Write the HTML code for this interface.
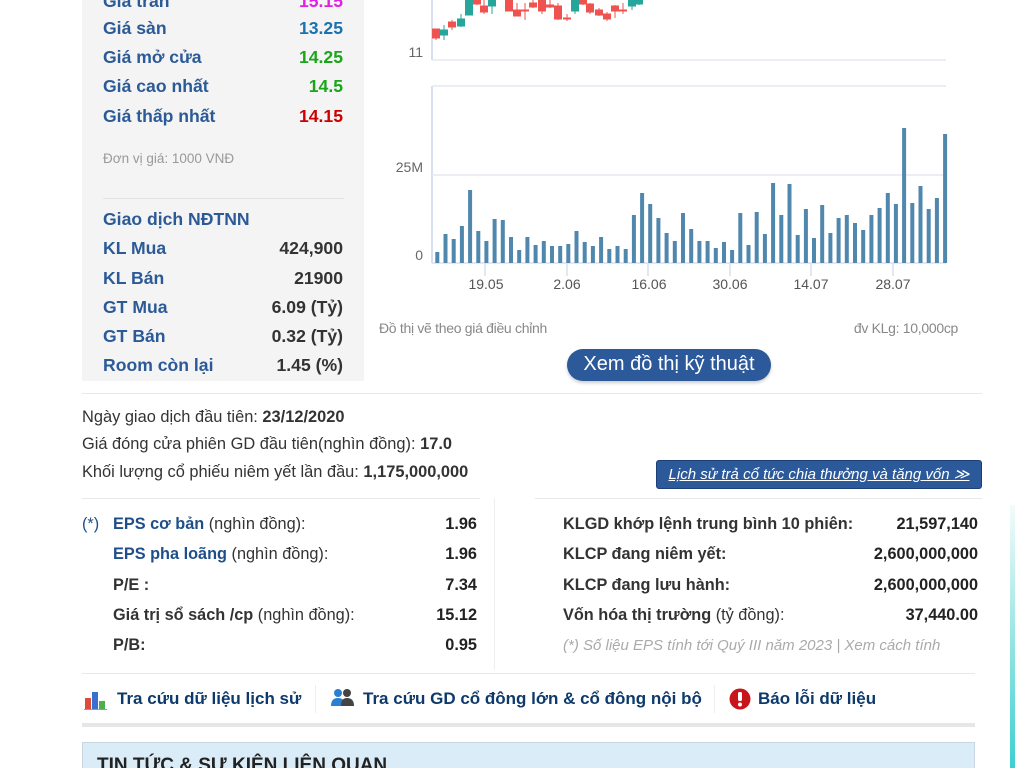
<!DOCTYPE html>
<html><head><meta charset="utf-8"><style>
*{margin:0;padding:0;box-sizing:border-box}
html,body{width:1015px;height:768px;overflow:hidden}
body{background:#fff;font-family:"Liberation Sans",Arial,sans-serif;position:relative}
.a{position:absolute;white-space:nowrap}
.lb{font-weight:bold;font-size:17.6px;color:#2b5a96}
.vr{font-weight:bold;font-size:17.6px;text-align:right;right:672px}
.t15{font-size:16.4px;color:#333}
.n{font-size:16.3px;color:#333}
.v{font-weight:bold;font-size:16.3px;color:#222;text-align:right}
.lk{font-weight:bold;font-size:17px;color:#0d3a6b}
</style></head><body>
<div class="a" style="left:82px;top:0;width:282px;height:381px;background:#f4f4f4"></div>
<div class="a lb" style="left:103px;top:-9px">Giá trần</div><div class="a vr" style="top:-9px;color:#e020e0">15.15</div>
<div class="a lb" style="left:103px;top:18px">Giá sàn</div><div class="a vr" style="top:18px;color:#1b72b0">13.25</div>
<div class="a lb" style="left:103px;top:47px">Giá mở cửa</div><div class="a vr" style="top:47px;color:#1aa51a">14.25</div>
<div class="a lb" style="left:103px;top:76px">Giá cao nhất</div><div class="a vr" style="top:76px;color:#1aa51a">14.5</div>
<div class="a lb" style="left:103px;top:106px">Giá thấp nhất</div><div class="a vr" style="top:106px;color:#cc0000">14.15</div>
<div class="a" style="left:103px;top:151px;font-size:13.5px;color:#999">Đơn vị giá: 1000 VNĐ</div>
<div class="a" style="left:103px;top:198px;width:241px;height:1px;background:#e4e4e4"></div>
<div class="a lb" style="left:103px;top:209px">Giao dịch NĐTNN</div>
<div class="a lb" style="left:103px;top:238px">KL Mua</div><div class="a vr" style="top:238px;color:#333">424,900</div>
<div class="a lb" style="left:103px;top:268px">KL Bán</div><div class="a vr" style="top:268px;color:#333">21900</div>
<div class="a lb" style="left:103px;top:297px">GT Mua</div><div class="a vr" style="top:297px;color:#333">6.09 (Tỷ)</div>
<div class="a lb" style="left:103px;top:326px">GT Bán</div><div class="a vr" style="top:326px;color:#333">0.32 (Tỷ)</div>
<div class="a lb" style="left:103px;top:355px">Room còn lại</div><div class="a vr" style="top:355px;color:#333">1.45 (%)</div>

<svg class="a" style="left:0;top:0" width="1015" height="300" font-family="Liberation Sans,sans-serif">
<line x1="432" y1="0" x2="432" y2="60" stroke="#d8dff0" stroke-width="2"/>
<line x1="432" y1="60" x2="946" y2="60" stroke="#e6e9f0" stroke-width="1.5"/>
<text x="423" y="57" font-size="14" fill="#666" text-anchor="end">11</text>
<g fill="#ef5350" stroke="#ef5350">
<line x1="436" y1="29" x2="436" y2="40"/><rect x="432.5" y="29" width="7" height="9"/>
<line x1="452" y1="20" x2="452" y2="30"/><rect x="448.5" y="22" width="7" height="5"/>
<line x1="477" y1="0" x2="477" y2="5"/><rect x="473.5" y="0" width="7" height="4"/>
<line x1="484" y1="0" x2="484" y2="14"/><rect x="480.5" y="6" width="7" height="6"/>
<line x1="509" y1="0" x2="509" y2="11"/><rect x="505.5" y="0" width="7" height="11"/>
<line x1="517" y1="3" x2="517" y2="16"/><rect x="513.5" y="10" width="7" height="6"/>
<line x1="525" y1="3" x2="525" y2="20"/><rect x="521.5" y="10" width="7" height="1"/>
<line x1="533" y1="0" x2="533" y2="8"/><rect x="529.5" y="3" width="7" height="4"/>
<line x1="542" y1="0" x2="542" y2="14"/><rect x="538.5" y="0" width="7" height="11"/>
<line x1="550" y1="0" x2="550" y2="8"/><rect x="546.5" y="5" width="7" height="2"/>
<line x1="558" y1="3" x2="558" y2="20"/><rect x="554.5" y="6" width="7" height="13"/>
<line x1="567" y1="14" x2="567" y2="21"/><rect x="563.5" y="18" width="7" height="1"/>
<line x1="583" y1="0" x2="583" y2="5"/><rect x="579.5" y="0" width="7" height="4"/>
<line x1="590" y1="3" x2="590" y2="14"/><rect x="586.5" y="4" width="7" height="8"/>
<line x1="599" y1="8" x2="599" y2="16"/><rect x="595.5" y="10" width="7" height="5"/>
<line x1="607" y1="12" x2="607" y2="21"/><rect x="603.5" y="14" width="7" height="5"/>
<line x1="615" y1="5" x2="615" y2="18"/><rect x="611.5" y="6" width="7" height="5"/>
<line x1="623" y1="3" x2="623" y2="14"/><rect x="619.5" y="10" width="7" height="1"/>
</g>
<g fill="#26a69a" stroke="#26a69a">
<line x1="444" y1="25" x2="444" y2="40"/><rect x="440.5" y="30" width="7" height="5"/>
<line x1="461" y1="14" x2="461" y2="27"/><rect x="457.5" y="19" width="7" height="7"/>
<line x1="469" y1="0" x2="469" y2="15"/><rect x="465.5" y="0" width="7" height="15"/>
<line x1="492" y1="0" x2="492" y2="14"/><rect x="488.5" y="0" width="7" height="6"/>
<line x1="575" y1="0" x2="575" y2="14"/><rect x="571.5" y="0" width="7" height="11"/>
<line x1="632" y1="0" x2="632" y2="10"/><rect x="628.5" y="0" width="7" height="6"/>
<line x1="639" y1="0" x2="639" y2="5"/><rect x="635.5" y="0" width="7" height="4"/>
</g>
<line x1="432" y1="86" x2="432" y2="263" stroke="#d8dff0" stroke-width="2"/>
<line x1="432" y1="86" x2="946" y2="86" stroke="#e6e9f0" stroke-width="1.5"/>
<line x1="432" y1="175" x2="946" y2="175" stroke="#e6e9f0" stroke-width="1.5"/>
<line x1="432" y1="263" x2="946" y2="263" stroke="#d8dff0" stroke-width="1.5"/>
<text x="423" y="172" font-size="14" fill="#666" text-anchor="end">25M</text>
<text x="423" y="260" font-size="14" fill="#666" text-anchor="end">0</text>
<g stroke="#d8dff0" stroke-width="1.5">
<line x1="485" y1="263" x2="485" y2="276"/><line x1="567" y1="263" x2="567" y2="276"/><line x1="648" y1="263" x2="648" y2="276"/><line x1="730" y1="263" x2="730" y2="276"/><line x1="811" y1="263" x2="811" y2="276"/><line x1="893" y1="263" x2="893" y2="276"/>
</g>
<g font-size="14" fill="#555" text-anchor="middle">
<text x="486" y="289">19.05</text><text x="567" y="289">2.06</text><text x="649" y="289">16.06</text><text x="730" y="289">30.06</text><text x="811" y="289">14.07</text><text x="893" y="289">28.07</text>
</g>
<g fill="#4f87ad">
<rect x="435.3" y="252" width="4" height="11"/><rect x="443.5" y="234" width="4" height="29"/><rect x="451.7" y="239" width="4" height="24"/><rect x="459.9" y="226" width="4" height="37"/><rect x="468.1" y="190" width="4" height="73"/><rect x="476.3" y="231" width="4" height="32"/><rect x="484.4" y="241" width="4" height="22"/><rect x="492.6" y="219" width="4" height="44"/><rect x="500.8" y="220" width="4" height="43"/><rect x="509" y="237" width="4" height="26"/><rect x="517.2" y="250" width="4" height="13"/><rect x="525.4" y="237" width="4" height="26"/><rect x="533.6" y="245" width="4" height="18"/><rect x="541.8" y="241" width="4" height="22"/><rect x="550" y="246" width="4" height="17"/><rect x="558.2" y="246" width="4" height="17"/><rect x="566.3" y="244" width="4" height="19"/><rect x="574.5" y="231" width="4" height="32"/><rect x="582.7" y="242" width="4" height="21"/><rect x="590.9" y="246" width="4" height="17"/><rect x="599.1" y="237" width="4" height="26"/><rect x="607.3" y="249" width="4" height="14"/><rect x="615.5" y="246" width="4" height="17"/><rect x="623.7" y="249" width="4" height="14"/><rect x="631.9" y="215" width="4" height="48"/><rect x="640.1" y="193" width="4" height="70"/><rect x="648.2" y="204" width="4" height="59"/><rect x="656.4" y="218" width="4" height="45"/><rect x="664.6" y="233" width="4" height="30"/><rect x="672.8" y="241" width="4" height="22"/><rect x="681" y="213" width="4" height="50"/><rect x="689.2" y="229" width="4" height="34"/><rect x="697.4" y="241" width="4" height="22"/><rect x="705.6" y="241" width="4" height="22"/><rect x="713.8" y="248" width="4" height="15"/><rect x="722" y="242" width="4" height="21"/><rect x="730.1" y="250" width="4" height="13"/><rect x="738.3" y="213" width="4" height="50"/><rect x="746.5" y="245" width="4" height="18"/><rect x="754.7" y="212" width="4" height="51"/><rect x="762.9" y="234" width="4" height="29"/><rect x="771.1" y="183" width="4" height="80"/><rect x="779.3" y="215" width="4" height="48"/><rect x="787.5" y="184" width="4" height="79"/><rect x="795.7" y="235" width="4" height="28"/><rect x="803.9" y="209" width="4" height="54"/><rect x="812" y="238" width="4" height="25"/><rect x="820.2" y="205" width="4" height="58"/><rect x="828.4" y="233" width="4" height="30"/><rect x="836.6" y="218" width="4" height="45"/><rect x="844.8" y="215" width="4" height="48"/><rect x="853" y="223" width="4" height="40"/><rect x="861.2" y="230" width="4" height="33"/><rect x="869.4" y="215" width="4" height="48"/><rect x="877.6" y="208" width="4" height="55"/><rect x="885.8" y="193" width="4" height="70"/><rect x="893.9" y="204" width="4" height="59"/><rect x="902.1" y="128" width="4" height="135"/><rect x="910.3" y="203" width="4" height="60"/><rect x="918.5" y="186" width="4" height="77"/><rect x="926.7" y="209" width="4" height="54"/><rect x="934.9" y="198" width="4" height="65"/><rect x="943.1" y="134" width="4" height="129"/>
</g>
</svg>
<div class="a" style="left:379px;top:320px;font-size:14px;color:#888;letter-spacing:-0.3px">Đồ thị vẽ theo giá điều chỉnh</div>
<div class="a" style="right:57px;top:320px;font-size:14px;color:#888;letter-spacing:-0.3px">đv KLg: 10,000cp</div>
<div class="a" style="left:567px;top:349px;width:204px;height:32px;background:#2c5999;border-radius:16px;color:#fff;font-size:20px;text-align:center;line-height:31px;box-shadow:0 2px 3px rgba(0,0,0,.2)">Xem đồ thị kỹ thuật</div>

<div class="a" style="left:82px;top:393px;width:900px;height:1px;background:#e8e8e8"></div>
<div class="a t15" style="left:82px;top:408px">Ngày giao dịch đầu tiên: <b>23/12/2020</b></div>
<div class="a t15" style="left:82px;top:435px">Giá đóng cửa phiên GD đầu tiên(nghìn đồng): <b>17.0</b></div>
<div class="a t15" style="left:82px;top:463px">Khối lượng cổ phiếu niêm yết lần đầu: <b>1,175,000,000</b></div>
<div class="a" style="left:656px;top:460px;width:326px;height:29px;background:#2c5999;border:1px solid #1d3f77;border-radius:3px;color:#fff;font-size:15px;font-style:italic;text-decoration:underline;text-align:center;line-height:27px">Lịch sử trả cổ tức chia thưởng và tăng vốn ≫</div>

<div class="a" style="left:82px;top:498px;width:398px;height:1px;background:#e8e8e8"></div>
<div class="a" style="left:535px;top:498px;width:447px;height:1px;background:#e8e8e8"></div>
<div class="a" style="left:494px;top:498px;width:1px;height:172px;background:#eee"></div>

<div class="a n" style="left:82px;top:515px;color:#1f4f8a">(*)</div>
<div class="a n" style="left:113px;top:515px"><b style="color:#1f4f8a">EPS cơ bản</b> (nghìn đồng):</div><div class="a v" style="right:538px;top:515px">1.96</div>
<div class="a n" style="left:113px;top:545px"><b style="color:#1f4f8a">EPS pha loãng</b> (nghìn đồng):</div><div class="a v" style="right:538px;top:545px">1.96</div>
<div class="a n" style="left:113px;top:576px"><b>P/E :</b></div><div class="a v" style="right:538px;top:576px">7.34</div>
<div class="a n" style="left:113px;top:606px"><b>Giá trị sổ sách /cp</b> (nghìn đồng):</div><div class="a v" style="right:538px;top:606px">15.12</div>
<div class="a n" style="left:113px;top:636px"><b>P/B:</b></div><div class="a v" style="right:538px;top:636px">0.95</div>

<div class="a n" style="left:563px;top:515px"><b>KLGD khớp lệnh trung bình 10 phiên:</b></div><div class="a v" style="right:37px;top:515px">21,597,140</div>
<div class="a n" style="left:563px;top:545px"><b>KLCP đang niêm yết:</b></div><div class="a v" style="right:37px;top:545px">2,600,000,000</div>
<div class="a n" style="left:563px;top:576px"><b>KLCP đang lưu hành:</b></div><div class="a v" style="right:37px;top:576px">2,600,000,000</div>
<div class="a n" style="left:563px;top:606px"><b>Vốn hóa thị trường</b> (tỷ đồng):</div><div class="a v" style="right:37px;top:606px">37,440.00</div>
<div class="a" style="left:563px;top:637px;font-size:15px;font-style:italic;color:#aaa">(*) Số liệu EPS tính tới Quý III năm 2023 | Xem cách tính</div>

<div class="a" style="left:82px;top:673px;width:893px;height:1px;background:#e8e8e8"></div>
<svg class="a" style="left:84px;top:690px" width="24" height="20"><rect x="1" y="8" width="6" height="11" fill="#e04a3a"/><rect x="8" y="2" width="6" height="17" fill="#3a6fd0"/><rect x="15" y="11" width="6" height="8" fill="#4caf50"/><line x1="0" y1="19.5" x2="23" y2="19.5" stroke="#999"/></svg>
<div class="a lk" style="left:117px;top:689px">Tra cứu dữ liệu lịch sử</div>
<div class="a" style="left:315px;top:685px;width:1px;height:28px;background:#eee"></div>
<svg class="a" style="left:331px;top:688px" width="24" height="20"><circle cx="7" cy="5" r="4" fill="#2a7fd0"/><path d="M0 18 Q0 10 7 10 Q14 10 14 18Z" fill="#2a7fd0"/><circle cx="16" cy="5" r="4" fill="#444"/><path d="M10 18 Q10 10 16 10 Q23 10 23 18Z" fill="#444"/></svg>
<div class="a lk" style="left:363px;top:689px">Tra cứu GD cổ đông lớn &amp; cổ đông nội bộ</div>
<div class="a" style="left:714px;top:685px;width:1px;height:28px;background:#eee"></div>
<svg class="a" style="left:729px;top:688px" width="22" height="22"><circle cx="11" cy="11" r="10.5" fill="#c8141a"/><rect x="9" y="4" width="4" height="9" rx="1.5" fill="#fff"/><circle cx="11" cy="16.5" r="2" fill="#fff"/></svg>
<div class="a lk" style="left:758px;top:689px">Báo lỗi dữ liệu</div>

<div class="a" style="left:82px;top:723px;width:893px;height:4px;background:#e6e6e6"></div>
<div class="a" style="left:82px;top:742px;width:893px;height:40px;background:#d9ecf7;border:1px solid #c9d6df"></div>
<div class="a" style="left:97px;top:755px;font-size:19px;font-weight:bold;color:#222">TIN TỨC &amp; SỰ KIỆN LIÊN QUAN</div>
<div class="a" style="left:1010px;top:505px;width:5px;height:263px;background:linear-gradient(#f4fbfa,#3fcfcf)"></div>
</body></html>
